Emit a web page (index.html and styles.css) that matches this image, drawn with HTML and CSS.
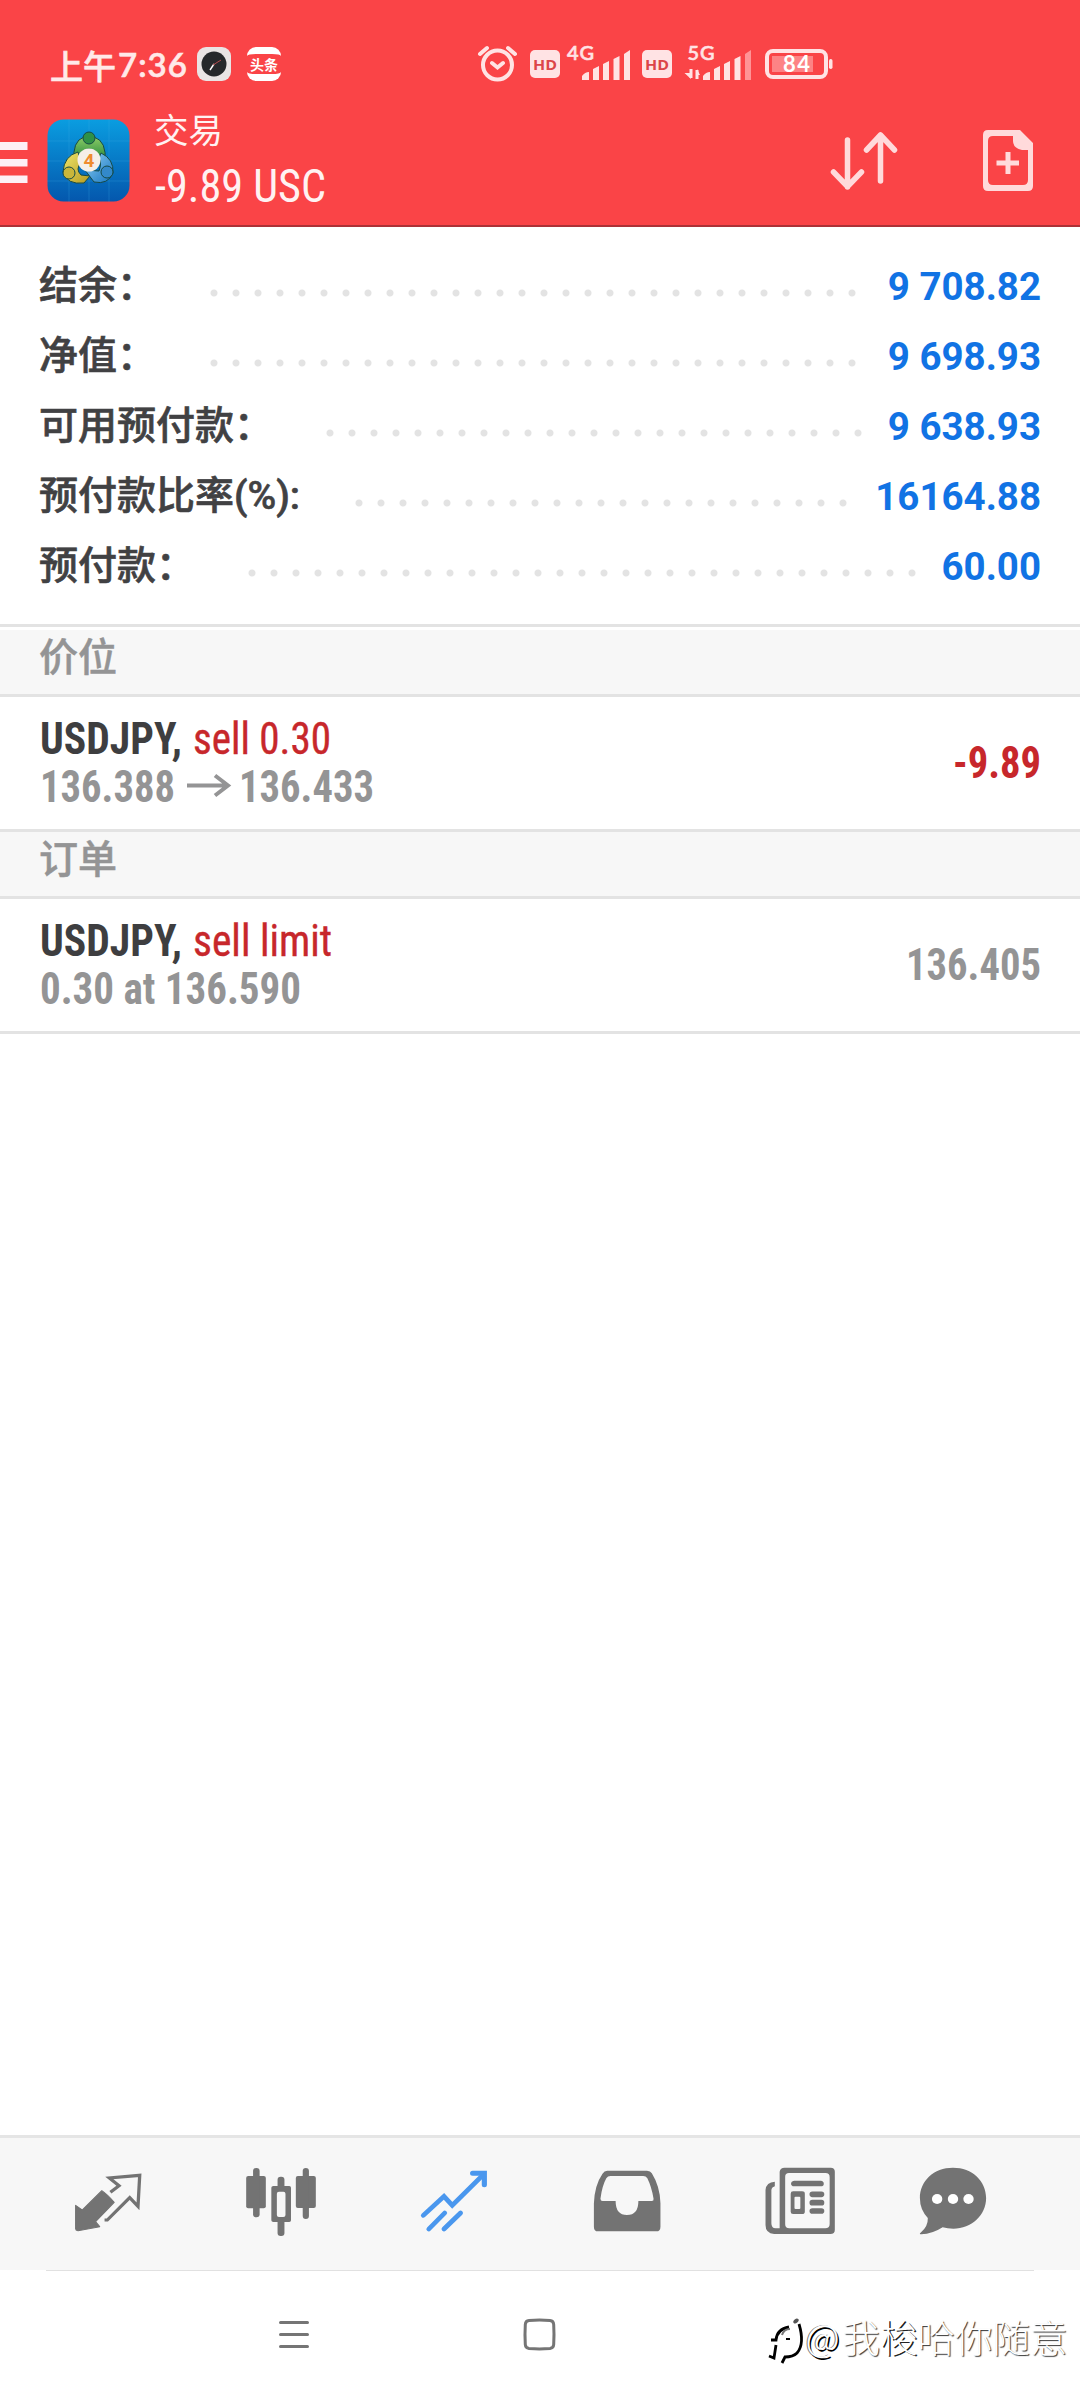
FILE: index.html
```html
<!DOCTYPE html>
<html lang="zh-CN">
<head>
<meta charset="utf-8">
<title>交易</title>
<link rel="stylesheet" href="styles.css">
</head>
<body>
<div class="screen">
  <header class="header">
    <div class="status">
      <span class="time-cn">上午</span><span class="time">7:36</span>
      <svg class="clock" width="34" height="34" viewBox="0 0 34 34"><rect width="34" height="34" rx="9" fill="#e9e4e4"/><circle cx="17" cy="17" r="12.500" fill="#26282b"/><path d="M13 23l4-6" stroke="#fff" stroke-width="1.4"/><path d="M16 18l8-5" stroke="#b4494c" stroke-width="1"/></svg>
      <span class="news"><span class="news-text">头条</span></span>
      <svg class="signals" width="360" height="60" viewBox="475 33 360 60">
        <g fill="none" stroke="#ffe3e4" stroke-width="4" stroke-linecap="round">
          <circle cx="497.500" cy="65" r="14.500"/><path d="M480 54l7-6M508 48l7 6M492 63l5.500 4.500 5.500-4.500" /></g>
        <rect x="530" y="50" width="30" height="28" rx="5" fill="#ffe3e4"/><text class="hd" x="533" y="70" textLength="24" lengthAdjust="spacingAndGlyphs">HD</text>
        <text class="net" x="567" y="60" textLength="27">4G</text>
        <path fill="#ffe3e4" d="M582 80v-4q3-4 7-4v8zM593 80V69l6-3v14zM603 80V64l6-3v19zM613.500 80V59l6-3v24zM624 80V54l6-4v30z"/>
        <rect x="642" y="50" width="30" height="28" rx="5" fill="#ffe3e4"/><text class="hd" x="645" y="70" textLength="24" lengthAdjust="spacingAndGlyphs">HD</text>
        <text class="net" x="687.500" y="60" textLength="27">5G</text>
        <path d="M691 69v9M697 79v-9" fill="none" stroke="#ffe3e4" stroke-width="3"/><path d="M684.500 73h6.500v6zM697 69v6h3z" fill="#ffe3e4"/>
        <path fill="#ffe3e4" d="M703 80v-4q3-4 7-4v8zM714 80V69l6-3v14zM724 80V64l6-3v19zM734.500 80V59l6-3v24z"/><path fill="#ff9496" d="M745 80V54l6-4v30z"/>
        <rect x="767" y="51" width="59" height="26" rx="6" fill="none" stroke="#ffe3e4" stroke-width="4"/>
        <rect x="772" y="56" width="41" height="16" fill="#fd8385"/><rect x="829" y="59" width="3.500" height="10" rx="1.700" fill="#ffe3e4"/>
        <text class="bat" x="783" y="72" textLength="27">84</text>
      </svg>
    </div>
    <div class="bar">
      <svg class="menu" width="28" height="42" viewBox="0 0 28 42"><path d="M0 0h27.500v8H0zM0 17h27.500v7.500H0zM0 33.500h27.500V41H0z" fill="#fdf0f6"/></svg>
      <svg class="logo" width="83" height="83" viewBox="0 0 83 83">
        <defs>
          <linearGradient id="sky" x1="0" y1="0" x2="0" y2="1"><stop offset="0" stop-color="#0a9de0"/><stop offset="1" stop-color="#0457ad"/></linearGradient>
          <linearGradient id="green" x1="0" y1="0" x2="0" y2="1"><stop offset="0" stop-color="#8ccb65"/><stop offset="1" stop-color="#1d8238"/></linearGradient>
          <linearGradient id="gold" x1="0" y1="0" x2="1" y2="1"><stop offset="0" stop-color="#efe66c"/><stop offset="1" stop-color="#b59b20"/></linearGradient>
          <linearGradient id="blue" x1="0" y1="0" x2="1" y2="1"><stop offset="0" stop-color="#8fd0f5"/><stop offset="1" stop-color="#1674c0"/></linearGradient>
        </defs>
        <rect x=".5" y=".5" width="82" height="82" rx="16" fill="url(#sky)"/>
        <path d="M0 22h83M0 42h83M0 62h83M22 0v83M42 0v83M62 0v83" stroke="#45b2e8" stroke-width=".7" opacity=".35"/>
        <g stroke="#164a45" stroke-width="1">
          <path d="M27 43q-2-21 10-25h10q13 4 11 25l-8-3q0-10-8-10t-8 10z" fill="url(#green)"/>
          <path d="M31 33Q17 37 16 53q4 13 21 11l6-7-9-1q-6-6 0-12z" fill="url(#gold)"/>
          <path d="M54 34q13 6 12 20-5 12-19 9l-9-12 14 1q3-8 0-13z" fill="url(#blue)"/>
          <circle cx="42" cy="19" r="6" fill="#2f9146"/><circle cx="22" cy="54" r="6" fill="#c9b63a"/><circle cx="60" cy="53" r="6" fill="#3389ca"/>
        </g>
        <circle cx="42" cy="41" r="11.500" fill="#f5efe8"/><text class="four" x="42" y="48" text-anchor="middle">4</text>
      </svg>
      <div class="titles"><div class="title">交易</div><svg class="line profit" width="180" height="60"><text x="0" y="45" textLength="171" lengthAdjust="spacingAndGlyphs">-9.89 USC</text></svg></div>
      <svg class="sort" width="70" height="64" viewBox="830 129 70 64"><path d="M848.500 140v47M834.500 172l14 14.500L862.500 172M881.500 181v-46M867.500 150l14-15 14 15" fill="none" stroke="#ffdadb" stroke-width="5.500" stroke-linecap="round" stroke-linejoin="round"/></svg>
      <svg class="new-order" width="50" height="61" viewBox="0 0 50 61"><path fill="#ffdadb" fill-rule="evenodd" d="M5 0h32l13 13v43q0 5-5 5H5q-5 0-5-5V5q0-5 5-5zM10 6q-5 0-5 5v39q0 5 5 5h30q5 0 5-5V20h-6q-9-2-9-9V6zM22.500 22h5v8.500H36v5h-8.500V44h-5v-8.500H13.500v-5h9z"/></svg>
    </div>
  </header>

  <section class="summary">
    <div class="row r1"><span class="label">结余：</span><span class="dots"></span><span class="value">9 708.82</span></div>
    <div class="row r1"><span class="label">净值：</span><span class="dots"></span><span class="value">9 698.93</span></div>
    <div class="row r3"><span class="label">可用预付款：</span><span class="dots"></span><span class="value">9 638.93</span></div>
    <div class="row r4"><span class="label">预付款比率(%):</span><span class="dots"></span><span class="value">16164.88</span></div>
    <div class="row r5"><span class="label">预付款：</span><span class="dots"></span><span class="value">60.00</span></div>
  </section>

  <h2 class="section first">价位</h2>
  <article class="item">
    <svg class="line" width="400" height="72"><text class="dark" x="0" y="57" textLength="142" lengthAdjust="spacingAndGlyphs">USDJPY,</text><text class="red" x="153" y="57" textLength="138" lengthAdjust="spacingAndGlyphs">sell 0.30</text></svg>
    <svg class="line second" width="400" height="60"><text class="gray" x="0" y="45" textLength="135" lengthAdjust="spacingAndGlyphs">136.388</text><path d="M147 28.500h41M175 18.500l13 10-13 10" fill="none" stroke="#949495" stroke-width="4"/><text class="gray" x="199" y="45" textLength="135" lengthAdjust="spacingAndGlyphs">136.433</text></svg>
    <svg class="line side" width="142" height="60"><text class="loss" x="53" y="45" textLength="88" lengthAdjust="spacingAndGlyphs">-9.89</text></svg>
  </article>
  <h2 class="section">订单</h2>
  <article class="item">
    <svg class="line" width="400" height="72"><text class="dark" x="0" y="57" textLength="142" lengthAdjust="spacingAndGlyphs">USDJPY,</text><text class="red" x="153" y="57" textLength="139" lengthAdjust="spacingAndGlyphs">sell limit</text></svg>
    <svg class="line second" width="400" height="60"><text class="gray" x="0" y="45" textLength="261" lengthAdjust="spacingAndGlyphs">0.30 at 136.590</text></svg>
    <svg class="line side" width="142" height="60"><text class="gray" x="6" y="45" textLength="135" lengthAdjust="spacingAndGlyphs">136.405</text></svg>
  </article>
  <main class="blank"></main>

  <nav class="tabs">
    <span class="tab"><svg viewBox="199 120 232 240" preserveAspectRatio="none"><path fill="#737373" stroke="#737373" stroke-width="3" stroke-linejoin="round" d="M221 256l19 14 57-58q16 11 36 35l-54 58 12 15-63 12q-7-1-7-6z"/><path fill="none" stroke="#737373" stroke-width="9.500" d="M322 217l25-20-28-23 88-8-5 93-24-26-65 67h-8"/></svg></span>
    <span class="tab"><svg viewBox="700 120 232 240" preserveAspectRatio="none"><g fill="#737373"><rect x="715" y="168" width="57" height="97" rx="6"/><rect x="735" y="144" width="19" height="148" rx="9"/><rect x="859" y="168" width="58" height="96" rx="6"/><rect x="879" y="144" width="18" height="153" rx="9"/><rect x="806" y="170" width="20" height="40" rx="9"/><rect x="806" y="290" width="20" height="58" rx="9"/><path fill="#f7f7f7" d="M805 213h20v80h-20z"/><path fill-rule="evenodd" d="M794 198h46q5 0 5 5v98q0 5-5 5h-46q-6 0-6-5v-98q0-5 6-5zM810 215q-6 0-6 6v64q0 6 6 6h13q6 0 6-6v-64q0-6-6-6z"/></g></svg></span>
    <span class="tab"><svg viewBox="1202 120 232 240" preserveAspectRatio="none"><g fill="none" stroke="#4a97ee" stroke-width="14" stroke-linecap="round"><path d="M1229 286l60-57 24 27 90-92M1245 327l46-48M1289 327l48-48"/><path d="M1372 160h34v34" stroke-width="15"/></g></svg></span>
    <span class="tab"><svg viewBox="138 120 232 240" preserveAspectRatio="none"><path fill="#737373" fill-rule="evenodd" d="M197 152h115q10 0 14 8 24 40 25 90v70q0 14-12 14H170q-12 0-12-14v-70q2-55 25-89 5-9 14-9zM206 168q-8 0-12 7-12 22-17 61 0 7 6 7h38q0 42 33 42t33-42h39q6 0 5-7-6-36-18-61-4-7-12-7z"/></svg></span>
    <span class="tab"><svg viewBox="641 120 232 240" preserveAspectRatio="none"><path fill="#737373" fill-rule="evenodd" d="M712 143h134q12 0 12 12v174q0 13-13 13H682q-25-2-25-27v-105q2-24 27-25v14q-10 3-10 12v99q0 15 12 15h12V155q2-12 14-12zM725 159q-11 0-11 11v143q0 12 12 12h104q13 0 13-13V171q0-12-12-12zM740 182h77q9 1 9 9t-9 8h-77q-9-1-9-8t9-9zM737 214h26q8 0 8 7v54q0 7-8 7h-26q-7 0-7-7v-54q0-7 7-7zM744 230q-3 0-3 3v31q0 3 3 3h11q3 0 3-3v-31q0-3-3-3z"/><path d="M793 223h26M793 248h26M793 273h26" stroke="#737373" stroke-width="17" stroke-linecap="round"/></svg></span>
    <span class="tab last"><svg viewBox="1083 120 232 240" preserveAspectRatio="none"><path fill="#737373" d="M1199 143c56 0 96 40 96 91s-42 92-95 92q-17 0-31-4-30 20-62 21-7-1-2-5 22-18 21-44-23-25-23-60c0-51 40-91 96-91z"/><g fill="#fff"><circle cx="1153" cy="237" r="15"/><circle cx="1199" cy="237" r="15"/><circle cx="1244" cy="237" r="15"/></g></svg></span>
  </nav>
  <footer class="system">
    <svg class="recent" width="30" height="30" viewBox="0 0 30 30"><path d="M1.500 2.500h27M1.500 14.500h27M1.500 26.500h27" stroke="#757575" stroke-width="3" stroke-linecap="round"/></svg>
    <svg class="home" width="33" height="33" viewBox="0 0 33 33"><path d="M6 2.500q10.500-1 21 0 3.500.3 3.700 4 .6 10 0 20-.2 3.500-3.700 4-10.500.8-21 0-3.500-.5-3.700-4-.6-10 0-20 .2-3.700 3.700-4z" fill="none" stroke="#757575" stroke-width="3"/></svg>
    <svg class="mark" width="38" height="50" viewBox="0 0 38 50"><g fill="none" stroke="#000" stroke-width="2.200"><path d="M3 23h5q1-11 13-13M8 28L6 41l-5-2M31 7q6 20-2 29-4 4-12 4l-3 6" stroke-width="2.800"/><path d="M14 18q2-6 8-6" stroke="#777" stroke-width="2"/></g><path d="M18 21h4v2h-4z"/><ellipse cx="28" cy="4" rx="3" ry="2" fill="#555" transform="rotate(-40 28 4)"/></svg>
    <span class="author"><span class="at">@</span>我<span class="deep">梭</span>哈你随意</span>
  </footer>
</div>
</body>
</html>
```
FILE: styles.css
```css
* { box-sizing: border-box; }
body { margin: 0; background: #fff; font-family: Roboto, "Noto Sans CJK SC", sans-serif; }
svg { display: block; flex: none; overflow: visible; }
.screen { width: 1080px; height: 2400px; display: flex; flex-direction: column; overflow: hidden; }
.header { height: 227px; background: #fa4447; border-bottom: 2px solid #ac3237; flex: none; }
.status { height: 100px; padding: 33px 0 0 50px; display: flex; align-items: flex-start; color: #ffe9e9; }
.time-cn { margin-top: 8px; font: 500 33px/48px "Noto Sans CJK SC", sans-serif; width: 68px; white-space: nowrap; -webkit-text-stroke: .6px; }
.time { margin-top: 9px; font: 600 33px/44px Lato, sans-serif; width: 79px; letter-spacing: 1px; -webkit-text-stroke: .6px; }
.clock { margin-top: 14px; }
.news { width: 34px; height: 34px; margin: 14px 0 0 16px; border: solid #fff; border-width: 7px 0; border-radius: 9px; display: flex; align-items: center; justify-content: center; }
.news-text { font: 700 14px/20px "Noto Sans CJK SC", sans-serif; color: #fff; }
.signals { margin-left: 194px; }
.hd { font: 700 15px "Open Sans", sans-serif; fill: #dc4549; }
.net { font: 600 20px Lato, sans-serif; fill: #ffe3e4; stroke: #ffe3e4; stroke-width: .5px; }
.bat { font: 700 22px Lato, sans-serif; fill: #fff; }
.four { font: 700 19px Roboto, sans-serif; fill: #ef8b2f; }
.bar { height: 125px; display: flex; align-items: flex-start; }
.menu { margin-top: 42px; }
.logo { margin: 19px 0 0 18.500px; }
.titles { width: 180px; margin: 2px 0 0 25.500px; color: #fff2f2; }
.title { margin-left: -1px; font: 400 34.500px/52px "Noto Sans CJK SC", sans-serif; }
.line { font-family: "Roboto Condensed", Roboto, sans-serif; font-stretch: 75%; font-size: 45px; }
.profit { margin-top: 3px; font-size: 46.500px; fill: #fff2f2; }
.sort { margin: 29px 0 0 494px; }
.new-order { margin: 30px 0 0 83.500px; }
.summary { height: 397px; padding: 24px 39px 0 39px; flex: none; }
.row { height: 70px; display: grid; align-items: start; }
.r1 { grid-template-columns: 170.500px 646px 1fr; }
.r3 { grid-template-columns: 287.200px 536px 1fr; }
.r4 { grid-template-columns: 316.200px 492px 1fr; }
.r5 { grid-template-columns: 209.400px 668px 1fr; }
.label { font: 500 39px/70px Roboto, "Noto Sans CJK SC", sans-serif; color: #414143; white-space: nowrap; -webkit-text-stroke: .6px #414143; }
.value { font: 700 38.500px/71px Roboto, sans-serif; color: #1173e4; text-align: right; white-space: nowrap; }
.dots { height: 8px; margin-top: 38px; background: radial-gradient(circle at 4px 4px, #e3e3e3 3px, transparent 4px) 0 0 / 22px 8px repeat-x; }
.section { margin: 0; height: 70px; padding-left: 39px; background: #f7f7f7; border: solid #e3e3e3; border-width: 3px 0; font: 500 39px/49px "Noto Sans CJK SC", sans-serif; color: #949495; flex: none; -webkit-text-stroke: .5px; }
.section.first { height: 73px; box-shadow: inset 0 3px #fff; line-height: 55px; }
.item { height: 132px; padding-left: 39.500px; display: grid; grid-template-columns: 860px 142px; grid-template-rows: 60px 72px; flex: none; }
.item .side { grid-area: 1 / 2 / 3 / 3; margin-top: 36px; }
.second { grid-area: 2 / 1; }
.dark { fill: #3e3e40; font-weight: 700; }
.red { fill: #c7272b; stroke: #c7272b; stroke-width: .4px; }
.gray { fill: #949495; font-weight: 700; }
.loss { fill: #c7272b; font-weight: 700; }
.blank { flex: 1; border-top: 3px solid #e3e3e3; }
.tabs { height: 135px; flex: none; background: #f7f7f7; border-top: 3px solid #e5e5e5; display: flex; padding: 22px 0 0 21px; }
.tab { width: 173px; display: flex; justify-content: center; }
.tab.last { width: 134px; }
.tab svg { width: 80px; height: 80px; }
.system { height: 130px; flex: none; display: flex; align-items: flex-start; background: linear-gradient(#e1e1e1, #e1e1e1) 46px 0 / 988px 1px no-repeat; }
.recent { margin: 50px 0 0 279px; }
.home { margin: 48px 0 0 213.500px; }
.mark { margin: 47px 0 0 212px; }
.author { margin: 38px 0 0 0; font: 300 37.500px/56px "Noto Sans CJK SC", sans-serif; color: #fff; text-shadow: 1px 1px 1px #333; white-space: nowrap; }
.at { display: inline-block; width: 37px; text-shadow: 1.500px 1.500px 0 #000, -1px -.5px 0 #777; }
.deep { text-shadow: 1.500px 1px 0 #222; }
```
